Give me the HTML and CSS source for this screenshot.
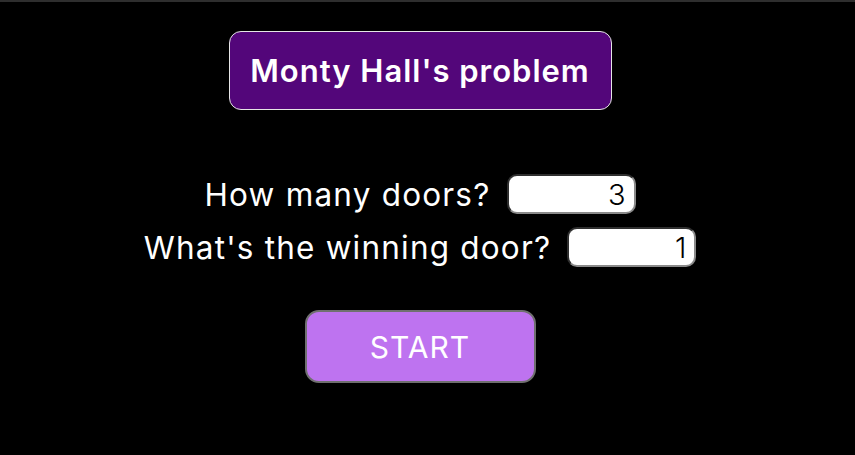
FILE: index.html
```html
<!DOCTYPE html>
<html lang="en">
<head>
<meta charset="utf-8">
<title>Monty Hall's problem</title>
<link rel="stylesheet" href="styles.css">
</head>
<body>
<main class="app">
  <h1 class="title">Monty Hall's problem</h1>
  <form class="setup">
    <label class="row">
      <span class="label">How many doors?</span>
      <input class="num" type="text" value="3">
    </label>
    <label class="row">
      <span class="label">What's the winning door?</span>
      <input class="num" type="text" value="1">
    </label>
    <button class="start" type="button">START</button>
  </form>
</main>
</body>
</html>
```
FILE: styles.css
```css
html, body {
  margin: 0;
  background: #000;
}
body {
  border-top: 2px solid #2e2e2e;
  height: 453px;
  font-family: Inter, "Liberation Sans", sans-serif;
  color: #fff;
}
.app {
  width: 840px;
  display: flex;
  flex-direction: column;
  align-items: center;
}
.title {
  box-sizing: border-box;
  width: 383px;
  height: 79px;
  margin: 29px 0 0;
  display: flex;
  align-items: center;
  justify-content: center;
  background: #53067a;
  border: 1px solid #e6e6e6;
  border-radius: 12px;
  font-size: 31px;
  font-weight: 600;
  letter-spacing: 1px;
}
.setup {
  margin-top: 64px;
  display: flex;
  flex-direction: column;
  align-items: center;
  gap: 13px;
}
.row {
  display: flex;
  align-items: center;
  gap: 16px;
  height: 40px;
}
.label {
  font-size: 31.5px;
  font-weight: 400;
  letter-spacing: 1.2px;
}
.num {
  box-sizing: border-box;
  width: 129px;
  height: 40px;
  padding: 0 8px;
  border-style: solid;
  border-width: 2px;
  border-color: #2f2f2f #8a8a8a #8a8a8a #2f2f2f;
  border-radius: 10px;
  background: #fff;
  color: #000;
  text-align: right;
  font-family: Inter, "Liberation Sans", sans-serif;
  font-size: 29px;
  font-weight: 300;
  outline: none;
}
.start {
  box-sizing: border-box;
  width: 231px;
  height: 73px;
  margin-top: 30px;
  background: #be73f0;
  border: 2px solid #707070;
  border-radius: 14px;
  color: #fff;
  font-family: Inter, "Liberation Sans", sans-serif;
  font-size: 30px;
  font-weight: 400;
  letter-spacing: 1px;
}
```
